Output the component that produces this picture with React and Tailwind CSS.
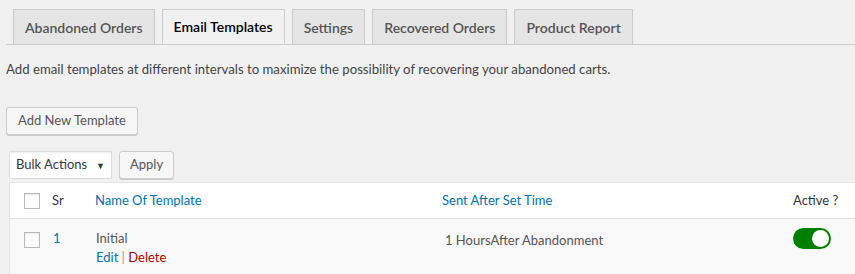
import React from "react";

const tabs = ["Abandoned Orders", "Email Templates", "Settings", "Recovered Orders", "Product Report"];

export default function App() {
  const active = "Email Templates";

  return (
    <div className="w-full h-[274px] overflow-hidden bg-[#f1f1f1] text-[13px] text-[#444]" style={{ fontFamily: '"Segoe UI", Lato, sans-serif' }}>
      {/* tab bar */}
      <div className="ml-[6px] pt-[9px] pl-[7px] flex gap-[7px] border-b border-[#ccc]">
        {tabs.map((t) => (
          <div
            key={t}
            className={
              t === active
                ? "h-[35px] -mb-px px-[11px] flex items-center border border-[#ccc] border-b-[#f1f1f1] bg-[#f1f1f1] text-[14px] font-semibold text-black"
                : "h-[35px] px-[11px] flex items-center border border-b-0 border-[#ccc] bg-[#e5e5e5] text-[14px] font-semibold text-[#555]"
            }
          >
            {t}
          </div>
        ))}
      </div>

      <p className="ml-[6px] mt-[14px] leading-[20px] text-[13.2px]">
        Add email templates at different intervals to maximize the possibility of recovering your abandoned carts.
      </p>

      <div className="ml-[6px] mt-[28px]">
        <button className="h-[28px] px-[11px] bg-[#f7f7f7] border border-[#ccc] rounded-[3px] shadow-[0_1px_0_#ccc] text-[#555]">
          Add New Template
        </button>
      </div>

      <div className="ml-[9px] mt-[16px] flex gap-[7px]">
        <div className="h-[28px] w-[103px] pl-[6px] pr-[6px] flex items-center justify-between bg-white border border-[#ddd] text-[#32373c] shadow-[inset_0_1px_2px_rgba(0,0,0,0.07)]">
          <span>Bulk Actions</span>
          <span className="text-[9px] mt-[1px]">▼</span>
        </div>
        <button className="h-[28px] px-[10px] bg-[#f7f7f7] border border-[#ccc] rounded-[3px] shadow-[0_1px_0_#ccc] text-[#555]">
          Apply
        </button>
      </div>

      {/* table */}
      <div className="ml-[9px] mt-[3px] bg-white border-t border-l border-[#e5e5e5]">
        <div className="h-[36px] flex items-center border-b border-[#e1e1e1]">
          <div className="w-[42px] flex justify-center pl-[1px]">
            <span className="w-[16px] h-[16px] border border-[#b4b9be] bg-white shadow-[inset_0_1px_2px_rgba(0,0,0,0.1)]" />
          </div>
          <div className="w-[43px] text-[#32373c]">Sr</div>
          <div className="w-[347px] text-[#0073aa]">Name Of Template</div>
          <div className="w-[351px] text-[#0073aa]">Sent After Set Time</div>
          <div className="text-[#32373c]">Active ?</div>
        </div>
        <div className="h-[57px] flex items-start bg-[#f9f9f9] pt-[9px]">
          <div className="w-[42px] flex justify-center pl-[1px] pt-[4px]">
            <span className="w-[16px] h-[16px] border border-[#b4b9be] bg-white shadow-[inset_0_1px_2px_rgba(0,0,0,0.1)]" />
          </div>
          <div className="w-[44px] pl-[1px] text-[#0073aa] leading-[20px]">1</div>
          <div className="w-[349px] leading-[20px] text-[#555]">
            <div>Initial</div>
            <div className="-mt-px">
              <span className="text-[#0073aa]">Edit</span>
              <span className="text-[#999]"> | </span>
              <span className="text-[#a00]">Delete</span>
            </div>
          </div>
          <div className="w-[348px] pt-[2px] leading-[20px] text-[#555]">1 HoursAfter Abandonment</div>
          <div>
            <div className="w-[38px] h-[21px] rounded-full bg-[#008000] flex items-center justify-end pr-[2px]">
              <span className="w-[17px] h-[17px] rounded-full bg-white" />
            </div>
          </div>
        </div>
      </div>
    </div>
  );
}
